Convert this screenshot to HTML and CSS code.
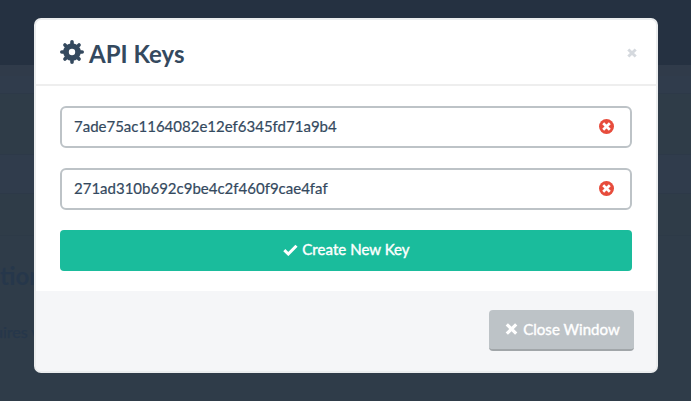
FILE: index.html
```html
<!DOCTYPE html>
<html lang="en">
<head>
<meta charset="utf-8">
<title>API Keys</title>
<link rel="stylesheet" href="styles.css">
</head>
<body>
<div class="page">
  <div class="navbar"></div>
  <div class="strip"></div>
  <div class="toolbar"></div>
  <div class="row row-a"></div>
  <div class="row row-b"></div>
  <div class="row row-a short"></div>
  <div class="content">
    <h2 class="section-title">ation</h2>
    <p class="section-text">uires v</p>
  </div>
</div>
<div class="modal">
  <header class="modal-header">
    <svg class="gear" viewBox="-12 -12 24 24">
      <g class="teeth"><path d="M0-10.200V10.200M-10.200 0H10.200"/><path d="M0-10V10M-10 0H10" transform="rotate(45)"/></g>
      <circle r="8.800"/><circle class="hub" r="3.200"/>
    </svg>
    <h1 class="title">API Keys</h1>
    <svg class="dismiss" viewBox="0 0 10 10"><path d="M1.300 1.500 8.700 8.500M8.700 1.500 1.300 8.500"/></svg>
  </header>
  <main class="modal-body">
    <div class="key"><span>7ade75ac1164082e12ef6345fd71a9b4</span>
      <svg class="remove" viewBox="0 0 15 15"><circle cx="7.500" cy="7.500" r="7.500"/><path d="M4.200 4.200 10.800 10.800M10.800 4.200 4.200 10.800"/></svg></div>
    <div class="key"><span>271ad310b692c9be4c2f460f9cae4faf</span>
      <svg class="remove" viewBox="0 0 15 15"><circle cx="7.500" cy="7.500" r="7.500"/><path d="M4.200 4.200 10.800 10.800M10.800 4.200 4.200 10.800"/></svg></div>
    <button class="btn create"><svg class="check" viewBox="0 0 15 12"><path d="M1.300 6.200 5.300 10 13.500 1.700"/></svg><span>Create New Key</span></button>
  </main>
  <footer class="modal-footer">
    <button class="btn close"><svg class="cross" viewBox="0 0 12 12"><path d="M1.300 1.300 10.700 10.700M10.700 1.300 1.300 10.700"/></svg><span>Close Window</span></button>
  </footer>
</div>
</body>
</html>
```
FILE: styles.css
```css
* { box-sizing: border-box; }
body { margin: 0; width: 691px; height: 401px; overflow: hidden; font-family: Lato, "Liberation Sans", sans-serif; color: #34495e; background: #2f3c4a; display: grid; }
.page, .modal { grid-area: 1 / 1; }
.page { display: flex; flex-direction: column; }
.navbar { height: 65px; background: #253141; }
.strip { height: 11px; background: #303b4a; }
.toolbar { height: 17px; background: #303c4c; }
.row { height: 61px; border-top: 1px solid #2d3948; }
.row-a { background: #2f3c48; }
.row-b { height: 39px; background: #303c4c; }
.row.short { height: 43px; border-bottom: 1px solid #2d3a47; }
.content { flex: 1; background: #2f3c49; }
.section-title { margin: 26px 0 0 -12px; font-size: 24px; line-height: 28px; color: #26374b; }
.section-text { margin: 32px 0 0 -6px; font-size: 16px; line-height: 20px; color: #26374b; -webkit-text-stroke: .25px; }
.modal { width: 624px; height: 355px; margin: 18px 0 0 34px; border: 2px solid #ebedee; border-radius: 7px; background: #fff; display: flex; flex-direction: column; overflow: hidden; position: relative; }
.modal-header { height: 66px; flex: none; border-bottom: 2px solid #eee; display: flex; align-items: center; padding: 0 19px 0 24px; }
.gear { width: 24px; height: 24px; fill: #34495e; }
.teeth { stroke: #34495e; stroke-width: 3.600; stroke-linecap: round; }
.hub { fill: #fff; }
.title { margin: 4px auto 0 5px; font-size: 24px; line-height: 30px; font-weight: 700; }
.dismiss { width: 10px; height: 10px; margin-top: 2px; fill: none; stroke: #d5d9de; stroke-width: 3; }
.modal-body { flex: none; height: 205px; padding: 20px 24px; display: flex; flex-direction: column; gap: 20px; }
.key { height: 42px; border: 2px solid #bdc3c7; border-radius: 6px; padding: 0 16px 0 12px; display: flex; align-items: center; justify-content: space-between; font-size: 15px; -webkit-text-stroke: .2px; }
.key span { margin-top: -2px; }
.remove { width: 15px; height: 15px; margin-top: -1px; fill: #e74c3c; }
.remove path { stroke: #fff; stroke-width: 2.700; }
.btn { border: 0; color: #fff; font: 400 15px/20px Lato, sans-serif; display: flex; align-items: center; justify-content: center; padding: 0; -webkit-text-stroke: .4px; }
.btn span { margin-top: -2px; letter-spacing: .04px; }
.create { height: 41px; border-radius: 4px; background: #1abc9c; gap: 4px; padding: 0 0 1px 1px; }
.check { width: 15px; height: 12px; fill: none; stroke: #fff; stroke-width: 3; margin-top: -1px; }
.modal-footer { flex: 1; background: #f5f6f8; display: flex; justify-content: flex-end; align-items: flex-start; padding: 19px 22px 0 0; }
.close { width: 145px; height: 41px; border-radius: 4px; background: #bdc3c7; border-bottom: 2px solid #a1a6a9; gap: 5px; padding-left: 2px; }
.cross { width: 13px; height: 12px; stroke: #fff; stroke-width: 3.200; margin-top: -1px; }
```
